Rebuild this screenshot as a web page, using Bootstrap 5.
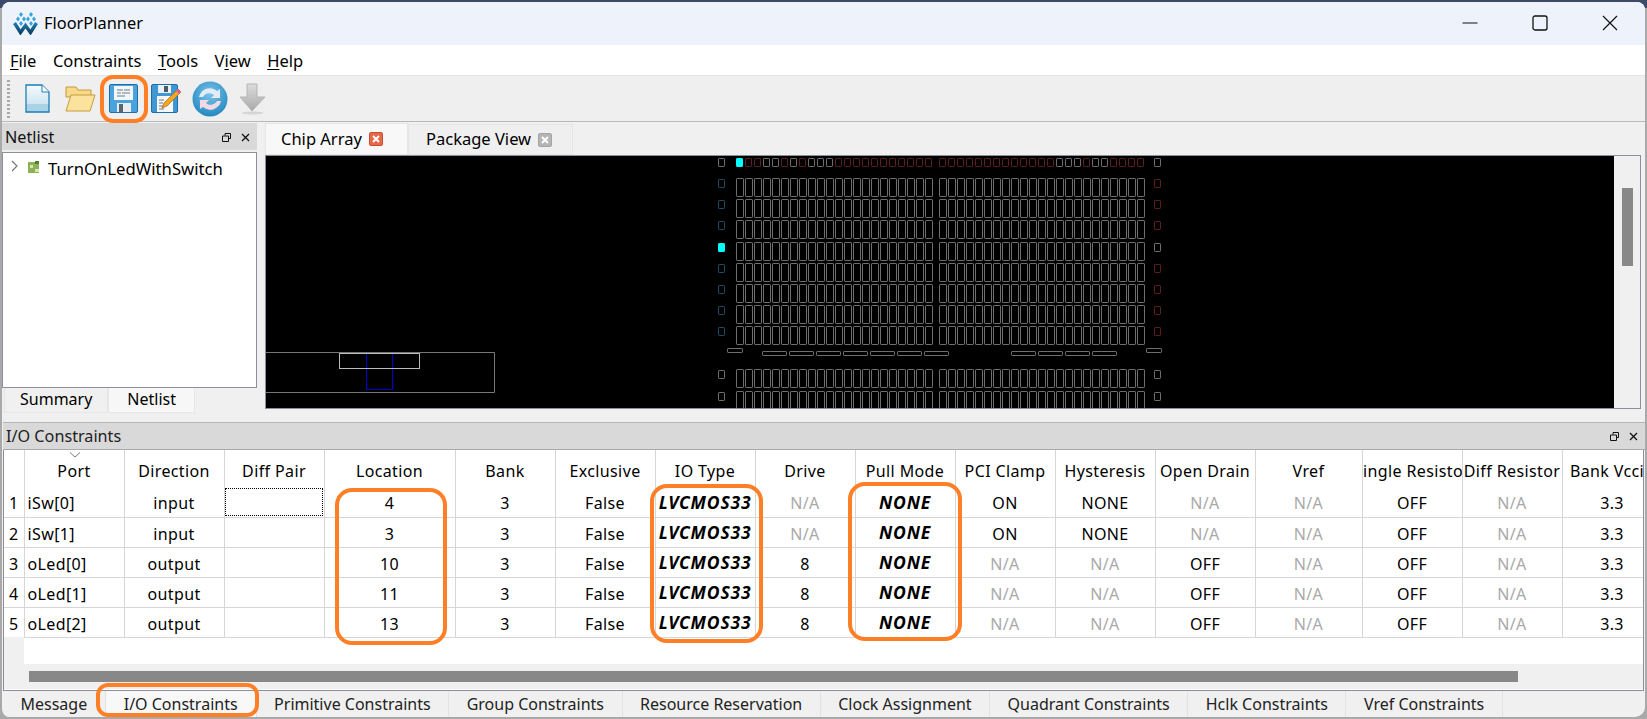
<!DOCTYPE html>
<html lang="en">
<head>
  <meta charset="UTF-8" />
  <meta name="viewport" content="width=device-width, initial-scale=1.0"/>
  <title>FloorPlanner</title>
  <link href="https://cdn.jsdelivr.net/npm/bootstrap@5.3.2/dist/css/bootstrap.min.css" rel="stylesheet" />
  <style>
    html, body { height: 100%; overflow: hidden; }
    body {
      background: linear-gradient(#3a4a68 8px, #a9a9a9 8px);
      font-family: "Noto Sans", sans-serif;
      font-size: 16px;
      color: #000;
    }
    .app-root { position: relative; width: 1647px; height: 719px; padding: 2px; }
    .app-win { height: 715px; background: #f0f0f0; border-radius: 8px 8px 10px 8px; overflow: hidden; }
    .title-bar { height: 43px; background: #eef2fa; padding: 0 0 1px 11px; }
    .title-text { font-size: 16.4px; margin-left: 6px; }
    .win-btn { width: 70px; height: 41px; }
    .menu-bar { height: 31px; background: #fff; border-bottom: 1px solid #e4e4e4; padding: 2px 0 0 8px; column-gap: 16.5px; font-size: 16.5px; }
    .menu-bar u { text-underline-offset: 2px; }
    .tool-bar { height: 46px; background: #efefef; border-bottom: 1px solid #b9b9b9; padding-left: 14px; position: relative; }
    .tool-grip { width: 3px; height: 38px; position: absolute; left: 5px; top: 4px; background: repeating-linear-gradient(#aaa 0 2px, transparent 2px 4px); }
    .tool-btn { width: 43px; height: 45px; }
    .top-pane { height: 300px; }
    .left-pane { width: 255px; margin-right: 8px; padding-top: 1px; }
    .dock-head { height: 27px; background: #d9d9d9; padding: 2px 7px 0 3px; font-size: 16.2px; color: #111; }
    .dock-btns { gap: 10px; }
    .tree-box { height: 236px; margin-top: 2px; background: #fff; border: 1px solid #8a8f99; padding: 3px 0 0 8px; font-size: 16.7px; }
    .tree-label { margin-left: 7px; }
    .side-tabs { height: 25px; padding-left: 2px; font-size: 16px; }
    .side-tabs div { padding: 0 15px; height: 25px; line-height: 23px; background: #f0f0f0; border: 1px solid #e6e6e6; border-top: 0; }
    .side-tabs .on-tab { background: #f7f7f7; padding: 0 18px; }
    .right-pane { width: 1376px; padding-top: 1px; }
    .view-tabs { height: 32px; font-size: 16.5px; }
    .view-tab { height: 32px; padding: 0 9px 0 15px; background: #efefef; border: 1px solid #e6e6e6; gap: 7px; }
    .view-tab.on-tab { background: #f8f8f8; width: 143px; }
    .view-tab.off-tab { width: 165px; margin-top: 1px; height: 31px; padding-left: 17px; }
    .tab-x { width: 14px; height: 14px; flex: none; }
    .chip-frame { height: 254px; width: 1376px; border: 1px solid #8a8f99; background: #f0f0f0; }
    .chip-view { width: 1348px; height: 252px; background: #000; display: block; }
    .v-scroll { width: 26px; padding: 32px 0 0 8px; }
    .v-thumb { width: 11px; height: 78px; background: #888; }
    .bottom-head { height: 28px; margin-left: 1px; background: #d9d9d9; border-top: 1px solid #b5b5b5; border-bottom: 1px solid #a9a9a9; padding: 0 7px 0 3px; font-size: 16.2px; color: #222; }
    .grid-pane { height: 241px; margin-left: 1px; width: 1641px; background: #fff; border-left: 1px solid #8a8f99; border-right: 1px solid #8a8f99; border-bottom: 1px solid #8a8f99; overflow: hidden; }
    .grid-scroll { height: 214px; overflow: hidden; position: relative; }
    .row-filler { position: absolute; left: 0; top: 187px; width: 20px; height: 27px; background: #f0f0f0; }
    table.io-grid { table-layout: fixed; width: 1658px; margin: 0; border-collapse: collapse; font-size: 16px; letter-spacing: .38px; color: #000; }
    table.io-grid th, table.io-grid td { padding: 0; text-align: center; font-weight: 400; border: 0; border-right: 1px solid #d6d6d6; white-space: nowrap; overflow: hidden; }
    table.io-grid th { height: 37px; vertical-align: bottom; padding-bottom: 4px; position: relative; }
    table.io-grid td { height: 30px; border-bottom: 1px solid #d6d6d6; vertical-align: middle; padding-top: 3px; }
    .port-cell { text-align: left !important; padding-left: 3px !important; }
    .head-clip { display: flex; justify-content: center; overflow: hidden; }
    .head-clip span { flex: none; }
    .na-cell { color: #a9a9a9; }
    table.io-grid .set-cell { font-weight: 700; font-style: italic; font-size: 17.5px; letter-spacing: .8px; padding-top: 1px; }
    .cur-cell { outline: 1px dotted #000; outline-offset: -2px; }
    .sort-mark { position: absolute; left: 44px; top: 2px; }
    .h-scroll { height: 25px; padding: 7px 0 0 25px; background: #f0f0f0; }
    .h-thumb { width: 1489px; height: 11px; background: #888; }
    .bottom-tabs { height: 26px; font-size: 16px; padding-left: 1px; color: #222; }
    .bottom-tabs div { height: 26px; line-height: 27px; padding: 0 17.5px; background: #f0f0f0; border-right: 1px solid #e2e2e2; }
    .bottom-tabs .on-tab { background: #f8f8f8; padding: 0 18px; }
    .hl-ring { position: absolute; border: 4px solid #ff7f27; pointer-events: none; }
    .ring-save { left: 100px; top: 75px; width: 48px; height: 48px; border-radius: 13px; }
    .ring-loc { left: 335px; top: 488px; width: 112px; height: 157px; border-radius: 17px; }
    .ring-type { left: 650px; top: 484px; width: 113px; height: 159px; border-radius: 17px; }
    .ring-pull { left: 848px; top: 482px; width: 114px; height: 159px; border-radius: 17px; }
    .ring-tab { left: 96px; top: 683px; width: 163px; height: 34px; border-radius: 12px; }
  </style>
</head>
<body>
<div class="app-root">
  <div class="app-win d-flex flex-column">

    <div class="title-bar d-flex align-items-center flex-shrink-0">
      <svg width="25" height="23" viewBox="0 0 25 23">
        <defs><linearGradient id="logoW" x1="0" y1="0" x2="0" y2="1"><stop offset="0" stop-color="#1f7fb5"/><stop offset="1" stop-color="#0f4468"/></linearGradient></defs>
        <path d="M1.500 11l6 9.500 5-7 5 7 6-9.500" fill="none" stroke="url(#logoW)" stroke-width="3.400"/>
        <path d="M8 0l2 2.500-2 2.500-2-2.500zM5 4.500l2 2.500-2 2.500-2-2.500zM11 4.500l2 2.500-2 2.500-2-2.500zM8 9l2 2.500-2 2.500-2-2.500z" fill="#35a6e0"/>
        <path d="M18 0l2 2.500-2 2.500-2-2.500zM15 4.500l2 2.500-2 2.500-2-2.500zM21 4.500l2 2.500-2 2.500-2-2.500zM18 9l2 2.500-2 2.500-2-2.500z" fill="#35a6e0"/>
      </svg>
      <span class="title-text">FloorPlanner</span>
      <div class="ms-auto d-flex">
        <div class="win-btn d-flex align-items-center justify-content-center"><svg width="16" height="16"><path d="M.5 8h15" stroke="#111" fill="none"/></svg></div>
        <div class="win-btn d-flex align-items-center justify-content-center"><svg width="16" height="16"><rect x="1" y="1" width="14" height="14" rx="2" stroke="#111" stroke-width="1.300" fill="none"/></svg></div>
        <div class="win-btn d-flex align-items-center justify-content-center"><svg width="16" height="16"><path d="M1 1l14 14M15 1L1 15" stroke="#111" stroke-width="1.200" fill="none"/></svg></div>
      </div>
    </div>

    <div class="menu-bar d-flex align-items-center flex-shrink-0">
      <span><u>F</u>ile</span><span>Constraints</span><span><u>T</u>ools</span><span>V<u>i</u>ew</span><span><u>H</u>elp</span>
    </div>

    <div class="tool-bar d-flex align-items-center flex-shrink-0">
      <div class="tool-grip"></div>
      <div class="tool-btn d-flex align-items-center justify-content-center">
        <svg width="25" height="29" viewBox="0 0 25 29">
          <defs><linearGradient id="docFill" x1="0" y1="0" x2="0" y2="1"><stop offset="0" stop-color="#f4fafd"/><stop offset=".7" stop-color="#cfe6f2"/><stop offset=".71" stop-color="#a9d2e6"/></linearGradient></defs>
          <path d="M1 1h16l7 7v20H1z" fill="url(#docFill)" stroke="#1a7fb5" stroke-width="1.300"/>
          <path d="M17 1v7h7" fill="#fff" stroke="#1a7fb5"/>
        </svg>
      </div>
      <div class="tool-btn d-flex align-items-center justify-content-center">
        <svg width="31" height="26" viewBox="0 0 31 26">
          <path d="M1 1h10l2 3h13v7H1z" fill="#f7d98a" stroke="#c79a3c"/>
          <path d="M6 9h24l-5 16H1z" fill="#fbe39d" stroke="#c79a3c"/>
        </svg>
      </div>
      <div class="tool-btn d-flex align-items-center justify-content-center">
        <svg width="29" height="29" viewBox="0 0 29 29">
          <rect x=".5" y=".5" width="28" height="28" rx="1.500" fill="#4aa3dc" stroke="#1c6ea8"/>
          <rect x="5" y="2" width="19" height="14" fill="#f2f6f8"/>
          <path d="M8 6h6M15 6h6M8 9h4M13 9h8M8 12h8" stroke="#6a7a86"/>
          <rect x="8" y="19" width="14" height="9" fill="#e9eef2"/>
          <rect x="10" y="20" width="4" height="8" fill="#5a6670"/>
        </svg>
      </div>
      <div class="tool-btn d-flex align-items-center justify-content-center">
        <svg width="31" height="29" viewBox="0 0 31 29">
          <rect x=".5" y=".5" width="26" height="28" rx="1.500" fill="#3f97d4" stroke="#1c6ea8"/>
          <rect x="7" y="1" width="13" height="8" fill="#eaf0f4"/>
          <rect x="13" y="2" width="4" height="6" fill="#4d5963"/>
          <rect x="6" y="12" width="16" height="16" fill="#f5f7f8"/>
          <path d="M8 16h5M8 19h4M8 22h6M8 25h5" stroke="#6a7a86"/>
          <path d="M27 5l3 3-14 14-5 2 2-5z" fill="#f5a623" stroke="#a56a10" stroke-width=".7"/>
          <path d="M27 5l3 3-2 2-3-3z" fill="#d95ea8"/>
        </svg>
      </div>
      <div class="tool-btn d-flex align-items-center justify-content-center">
        <svg width="36" height="36" viewBox="0 0 36 36">
          <defs><radialGradient id="refFill" cx=".5" cy=".35" r=".7"><stop offset="0" stop-color="#7cc4ea"/><stop offset="1" stop-color="#1c84bd"/></radialGradient></defs>
          <circle cx="18" cy="18" r="17.500" fill="url(#refFill)"/>
          <path d="M7 16a11 11 0 0 1 18-6l3-2v9h-9l3-3a7 7 0 0 0-11 2z" fill="#e2ecf6"/>
          <path d="M29 20a11 11 0 0 1-18 6l-3 2v-9h9l-3 3a7 7 0 0 0 11-2z" fill="#f1d9e4"/>
        </svg>
      </div>
      <div class="tool-btn d-flex align-items-center justify-content-center">
        <svg width="27" height="32" viewBox="0 0 27 32">
          <defs><linearGradient id="dnFill" x1="0" y1="0" x2="0" y2="1"><stop offset="0" stop-color="#dcdcdc"/><stop offset="1" stop-color="#a9a9a9"/></linearGradient></defs>
          <path d="M8 1h10v13h8L13 28 1 14h7z" fill="url(#dnFill)" stroke="#b5b5b5"/>
          <ellipse cx="13.500" cy="30" rx="11" ry="1.500" fill="#d4d4d4"/>
        </svg>
      </div>
    </div>

    <div class="top-pane d-flex flex-shrink-0">
      <div class="left-pane">
        <div class="dock-head d-flex align-items-center">
          <span>Netlist</span>
          <div class="dock-btns ms-auto d-flex align-items-center">
            <svg width="9" height="9" viewBox="0 0 9 9"><path d="M3 2.500V.5h5.500v5H6.500M.5 3h6v5.500h-6z" fill="none" stroke="#111"/></svg>
            <svg width="9" height="9" viewBox="0 0 9 9"><path d="M1 1l7 7M8 1L1 8" stroke="#111" stroke-width="1.300"/></svg>
          </div>
        </div>
        <div class="tree-box d-flex align-items-start">
          <svg class="mt-1" width="8" height="12" viewBox="0 0 8 12"><path d="M1 1l5 5-5 5" fill="none" stroke="#777" stroke-width="1.200"/></svg>
          <svg class="mt-1 ms-2" width="14" height="14" viewBox="0 0 14 14"><rect x="1" y="2" width="11" height="11" fill="#8db255"/><rect x="3" y="5" width="3" height="3" fill="#d7e6b4"/><rect x="8" y="1" width="4" height="3" fill="#4f7f2f"/><rect x="8" y="9" width="4" height="3" fill="#d7e6b4"/></svg>
          <span class="tree-label">TurnOnLedWithSwitch</span>
        </div>
        <div class="side-tabs d-flex">
          <div>Summary</div>
          <div class="on-tab">Netlist</div>
        </div>
      </div>

      <div class="right-pane">
        <div class="view-tabs d-flex">
          <div class="view-tab on-tab d-flex align-items-center">
            <span>Chip Array</span>
            <svg class="tab-x" viewBox="0 0 14 14"><rect x=".5" y=".5" width="13" height="13" rx="1.500" fill="#e8684a" stroke="#c9502f"/><path d="M4 4l6 6M10 4l-6 6" stroke="#fff" stroke-width="2"/></svg>
          </div>
          <div class="view-tab off-tab d-flex align-items-center">
            <span>Package View</span>
            <svg class="tab-x" viewBox="0 0 14 14"><rect x=".5" y=".5" width="13" height="13" rx="1.500" fill="#b5b5b5" stroke="#a5a5a5"/><path d="M4 4l6 6M10 4l-6 6" stroke="#fff" stroke-width="2"/></svg>
          </div>
        </div>
        <div class="chip-frame d-flex">
          <svg class="chip-view" id="chipView" viewBox="0 0 1348 252"></svg>
          <div class="v-scroll"><div class="v-thumb"></div></div>
        </div>
      </div>
    </div>

    <div class="bottom-head d-flex align-items-center flex-shrink-0">
      <span>I/O Constraints</span>
      <div class="dock-btns ms-auto d-flex align-items-center">
        <svg width="9" height="9" viewBox="0 0 9 9"><path d="M3 2.500V.5h5.500v5H6.500M.5 3h6v5.500h-6z" fill="none" stroke="#111"/></svg>
        <svg width="9" height="9" viewBox="0 0 9 9"><path d="M1 1l7 7M8 1L1 8" stroke="#111" stroke-width="1.300"/></svg>
      </div>
    </div>

    <div class="grid-pane flex-shrink-0">
      <div class="grid-scroll">
        <table class="table io-grid" id="ioGrid"></table>
        <div class="row-filler"></div>
      </div>
      <div class="h-scroll"><div class="h-thumb"></div></div>
    </div>

    <div class="bottom-tabs d-flex flex-shrink-0">
      <div>Message</div>
      <div class="on-tab">I/O Constraints</div>
      <div>Primitive Constraints</div>
      <div>Group Constraints</div>
      <div>Resource Reservation</div>
      <div>Clock Assignment</div>
      <div>Quadrant Constraints</div>
      <div>Hclk Constraints</div>
      <div>Vref Constraints</div>
    </div>
  </div>

  <div class="hl-ring ring-save"></div>
  <div class="hl-ring ring-loc"></div>
  <div class="hl-ring ring-type"></div>
  <div class="hl-ring ring-pull"></div>
  <div class="hl-ring ring-tab"></div>
</div>

<script src="https://cdn.jsdelivr.net/npm/bootstrap@5.3.2/dist/js/bootstrap.bundle.min.js"></script>
<script>
  // io table
  const widths = [20,100,100,100,131,100,100,100,100,100,100,100,100,107,100,100,100];
  const heads = ["","Port","Direction","Diff Pair","Location","Bank","Exclusive","IO Type","Drive","Pull Mode","PCI Clamp","Hysteresis","Open Drain","Vref","Single Resistor","Diff Resistor","Bank Vccio"];
  const rows = [
    ["iSw[0]","input","","4","N/A","ON","NONE","N/A"],
    ["iSw[1]","input","","3","N/A","ON","NONE","N/A"],
    ["oLed[0]","output","","10","8","N/A","N/A","OFF"],
    ["oLed[1]","output","","11","8","N/A","N/A","OFF"],
    ["oLed[2]","output","","13","8","N/A","N/A","OFF"]
  ];
  const na = v => v === "N/A" ? " class='na-cell'" : "";
  let html = "<colgroup>" + widths.map(w => `<col width="${w}">`).join("") + "</colgroup><thead><tr>";
  heads.forEach((h, i) => {
    const mark = i === 1 ? `<svg class="sort-mark" width="12" height="6" viewBox="0 0 12 6"><path d="M1 .5l5 4.500 5-4.500" fill="none" stroke="#777"/></svg>` : "";
    html += `<th>${mark}<div class="head-clip"><span>${h || "&nbsp;"}</span></div></th>`;
  });
  html += "</tr></thead><tbody>";
  rows.forEach((r, i) => {
    html += `<tr><td>${i + 1}</td><td class="port-cell">${r[0]}</td><td>${r[1]}</td>`;
    html += `<td${i === 0 ? " class='cur-cell'" : ""}></td><td>${r[3]}</td><td>3</td><td>False</td>`;
    html += `<td class="set-cell">LVCMOS33</td><td${na(r[4])}>${r[4]}</td><td class="set-cell">NONE</td>`;
    html += `<td${na(r[5])}>${r[5]}</td><td${na(r[6])}>${r[6]}</td><td${na(r[7])}>${r[7]}</td>`;
    html += `<td class="na-cell">N/A</td><td>OFF</td><td class="na-cell">N/A</td><td>3.3</td></tr>`;
  });
  document.getElementById("ioGrid").innerHTML = html + "</tbody>";

  // chip array, coordinates are page px minus the view origin
  const ox = 266, oy = 156;
  const gray = "#6e6e6e", red = "#5a1f1f", blue = "#1f4a63", cyan = "#00ffff";
  let s = "";
  function box(x, y, w, h, c, fill) {
    s += `<rect x="${x - ox + .5}" y="${y - oy + .5}" width="${w}" height="${h}" rx=".6" fill="${fill ? c : "none"}" stroke="${c}"/>`;
  }
  const leftXs = [], rightXs = [];
  for (let i = 0; i < 22; i++) leftXs.push(736 + i * 9);
  for (let i = 0; i < 23; i++) rightXs.push(939 + i * 9);
  const topCols = "c r r g g r g r g g g r r r r r r r r r r r".split(" ")
    .concat("r r r r r r r r r r r r r g g g r g g r r r r".split(" "));
  leftXs.concat(rightXs).forEach((x, i) => {
    const t = topCols[i];
    box(x, 158, 6, 8, t === "c" ? cyan : t === "r" ? red : gray, t === "c");
  });
  box(718, 158, 6, 8, gray);
  box(1154, 158, 6, 8, gray);
  for (let r = 0; r < 8; r++) {
    const y = 178 + r * 21.2;
    leftXs.concat(rightXs).forEach(x => box(x, Math.round(y), 7, 18, gray));
    const sy = Math.round(y) + 1;
    if (r === 3) box(718, sy, 6, 8, cyan, true); else box(718, sy, 6, 8, blue);
    box(1154, sy, 6, 8, r === 3 ? gray : red);
  }
  for (let i = 0; i < 7; i++) box(762 + i * 27, 351, 24, 4, gray);
  for (let i = 0; i < 4; i++) box(1011 + i * 27, 351, 24, 4, gray);
  box(727, 348, 15, 4, gray);
  box(1146, 348, 15, 4, gray);
  [369, 391].forEach(y => {
    leftXs.concat(rightXs).forEach(x => box(x, y, 7, 18, gray));
    box(718, y + 1, 6, 8, gray);
    box(1154, y + 1, 6, 8, gray);
  });
  // minimap
  s += `<path d="M0 ${352 - oy + .5}H${494 - ox + .5}V${392 - oy + .5}H0" fill="none" stroke="#777"/>`;
  s += `<rect x="${366 - ox + .5}" y="${353 - oy + .5}" width="26" height="36" fill="none" stroke="#0000d0"/>`;
  s += `<rect x="${339 - ox + .5}" y="${353 - oy + .5}" width="80" height="15" fill="none" stroke="#bbb"/>`;
  document.getElementById("chipView").innerHTML = s;
</script>
</body>
</html>
